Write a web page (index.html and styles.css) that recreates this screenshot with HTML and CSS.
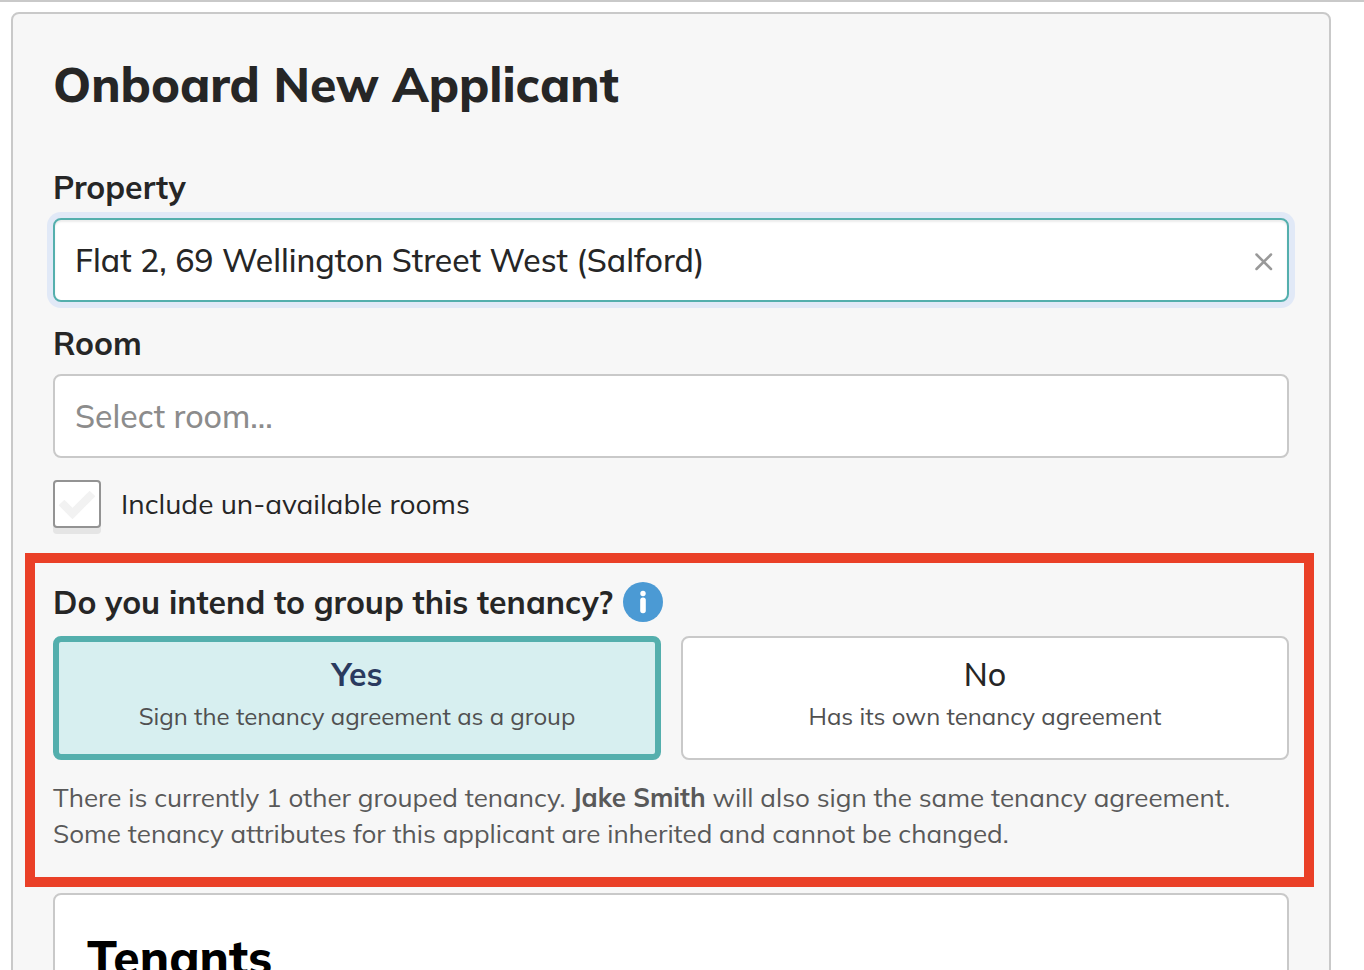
FILE: index.html
```html
<!DOCTYPE html>
<html lang="en">
<head>
<meta charset="utf-8">
<meta name="viewport" content="width=device-width, initial-scale=1">
<title>Onboard New Applicant</title>
<link rel="stylesheet" href="styles.css">
</head>
<body>
<main class="page">
  <form class="panel">
    <h1 class="title">Onboard New Applicant</h1>

    <div class="field">
      <label class="label" for="property">Property</label>
      <div class="control control-focused">
        <input class="control-input" id="property" type="text" value="Flat 2, 69 Wellington Street West (Salford)">
        <button class="clear" type="button" aria-label="Clear property">
          <svg class="clear-icon" viewBox="0 0 18 18" aria-hidden="true"><path d="M1.500 1.500l14.500 14.500M16 1.500L1.500 16"/></svg>
        </button>
      </div>
    </div>

    <div class="field">
      <label class="label" for="room">Room</label>
      <div class="control">
        <input class="control-input" id="room" type="text" placeholder="Select room...">
      </div>
    </div>

    <div class="check-row">
      <span class="check-box">
        <input class="check-input" id="unavailable" type="checkbox">
        <svg class="check-mark" viewBox="0 0 44 44" aria-hidden="true"><path d="M6.500 20.500l11 11 20-20"/></svg>
      </span>
      <label class="check-label" for="unavailable">Include un-available rooms</label>
    </div>

    <section class="group" aria-labelledby="group-question">
      <div class="question">
        <h2 class="label" id="group-question">Do you intend to group this tenancy?</h2>
        <button class="info" type="button" aria-label="More information">
          <svg class="info-icon" viewBox="0 0 40 40" aria-hidden="true"><circle cx="20" cy="20" r="20" fill="#4b9ad4"/><circle cx="20" cy="11.5" r="2.7" fill="#fff"/><rect x="17.2" y="15.5" width="5.6" height="15.7" rx="2.6" fill="#fff"/></svg>
        </button>
      </div>
      <div class="options">
        <button class="option option-selected" type="button" aria-pressed="true">
          <span class="option-name">Yes</span>
          <span class="option-note">Sign the tenancy agreement as a group</span>
        </button>
        <button class="option" type="button" aria-pressed="false">
          <span class="option-name">No</span>
          <span class="option-note">Has its own tenancy agreement</span>
        </button>
      </div>
      <p class="help">There is currently 1 other grouped tenancy. <strong>Jake Smith</strong> will also sign the same tenancy agreement.<br>Some tenancy attributes for this applicant are inherited and cannot be changed.</p>
    </section>

    <section class="tenants">
      <h2 class="tenants-title">Tenants</h2>
    </section>
  </form>
</main>
</body>
</html>
```
FILE: styles.css
```css
* {
  box-sizing: border-box;
}

body {
  margin: 0;
  background: #fff;
  color: #262626;
  font-family: Mulish, Muli, "Open Sans", sans-serif;
}

button,
input {
  font-family: inherit;
}

.page {
  height: 100vh;
  overflow: hidden;
  padding: 10px 33px 0 11px;
  border-top: 2px solid #c9c9c9;
}

.panel {
  padding: 40px;
  background: #f7f7f7;
  border: 2px solid #c9c9c9;
  border-radius: 8px;
}

.title {
  margin: 0 0 52px;
  font-size: 48px;
  font-weight: 800;
  line-height: 60px;
}

.field {
  margin-bottom: 20px;
}

.label {
  display: block;
  margin: 0;
  font-size: 32px;
  font-weight: 700;
  line-height: 42px;
}

.control {
  display: flex;
  align-items: center;
  height: 84px;
  margin-top: 10px;
  padding: 0 14px 0 20px;
  background: #fff;
  border: 2px solid #c9c9c9;
  border-radius: 8px;
}

.control-focused {
  border-color: #54afad;
  box-shadow: inset 0 2px 2px rgba(0, 0, 0, 0.08), 0 0 0 6px #e1e9f7;
}

.control-input {
  flex: 1;
  min-width: 0;
  height: 60px;
  padding: 0;
  color: #262626;
  font-size: 32px;
  font-weight: 500;
  background: transparent;
  border: 0;
  outline: 0;
}

.control-input::placeholder {
  color: #8c8c8c;
  opacity: 1;
}

.clear {
  display: flex;
  padding: 4px 0 0;
  background: none;
  border: 0;
}

.clear-icon {
  width: 18px;
  height: 18px;
  fill: none;
  stroke: #999;
  stroke-width: 2.5;
  stroke-linecap: round;
}

.check-row {
  display: flex;
  align-items: center;
  gap: 20px;
  margin: 22px 0 25px;
}

.check-box {
  display: grid;
  width: 48px;
  height: 48px;
}

.check-input {
  grid-area: 1 / 1;
  width: 48px;
  height: 48px;
  margin: 0;
  appearance: none;
  background: #fff;
  border: 2px solid #939393;
  border-radius: 4px;
  box-shadow: 0 6px 0 #e5e5e5;
}

.check-mark {
  grid-area: 1 / 1;
  place-self: center;
  width: 44px;
  height: 44px;
  fill: none;
  stroke: #f2f2f2;
  stroke-width: 8;
  pointer-events: none;
}

.check-label {
  font-size: 28px;
  font-weight: 400;
  line-height: 40px;
}

.group {
  margin: 0 -25px 6px -28px;
  padding: 18px 15px 25px 18px;
  border: 10px solid #ea4027;
}

.question {
  display: flex;
  align-items: center;
  gap: 10px;
  margin-bottom: 13px;
}

.info {
  display: flex;
  padding: 0;
  background: none;
  border: 0;
}

.info-icon {
  width: 40px;
  height: 40px;
}

.options {
  display: grid;
  grid-template-columns: 1fr 1fr;
  gap: 20px;
}

.option {
  display: flex;
  flex-direction: column;
  align-items: center;
  justify-content: center;
  height: 124px;
  padding: 0 0 12px;
  color: #262626;
  background: #fff;
  border: 2px solid #c9c9c9;
  border-radius: 8px;
}

.option-selected {
  background: #d7eff0;
  border: 6px solid #54afad;
}

.option-name {
  font-size: 32px;
  font-weight: 500;
  line-height: 48px;
}

.option-selected .option-name {
  color: #2a3a5f;
  font-weight: 700;
}

.option-note {
  color: #505050;
  font-size: 24px;
  font-weight: 400;
  line-height: 36px;
}

.help {
  margin: 20px 0 0;
  color: #595959;
  font-size: 26px;
  font-weight: 400;
  line-height: 36px;
}

.tenants {
  min-height: 240px;
  padding: 32px;
  background: #fff;
  border: 2px solid #c9c9c9;
  border-radius: 8px;
}

.tenants-title {
  margin: 0;
  color: #000;
  font-size: 48px;
  font-weight: 800;
  line-height: 60px;
}
```
